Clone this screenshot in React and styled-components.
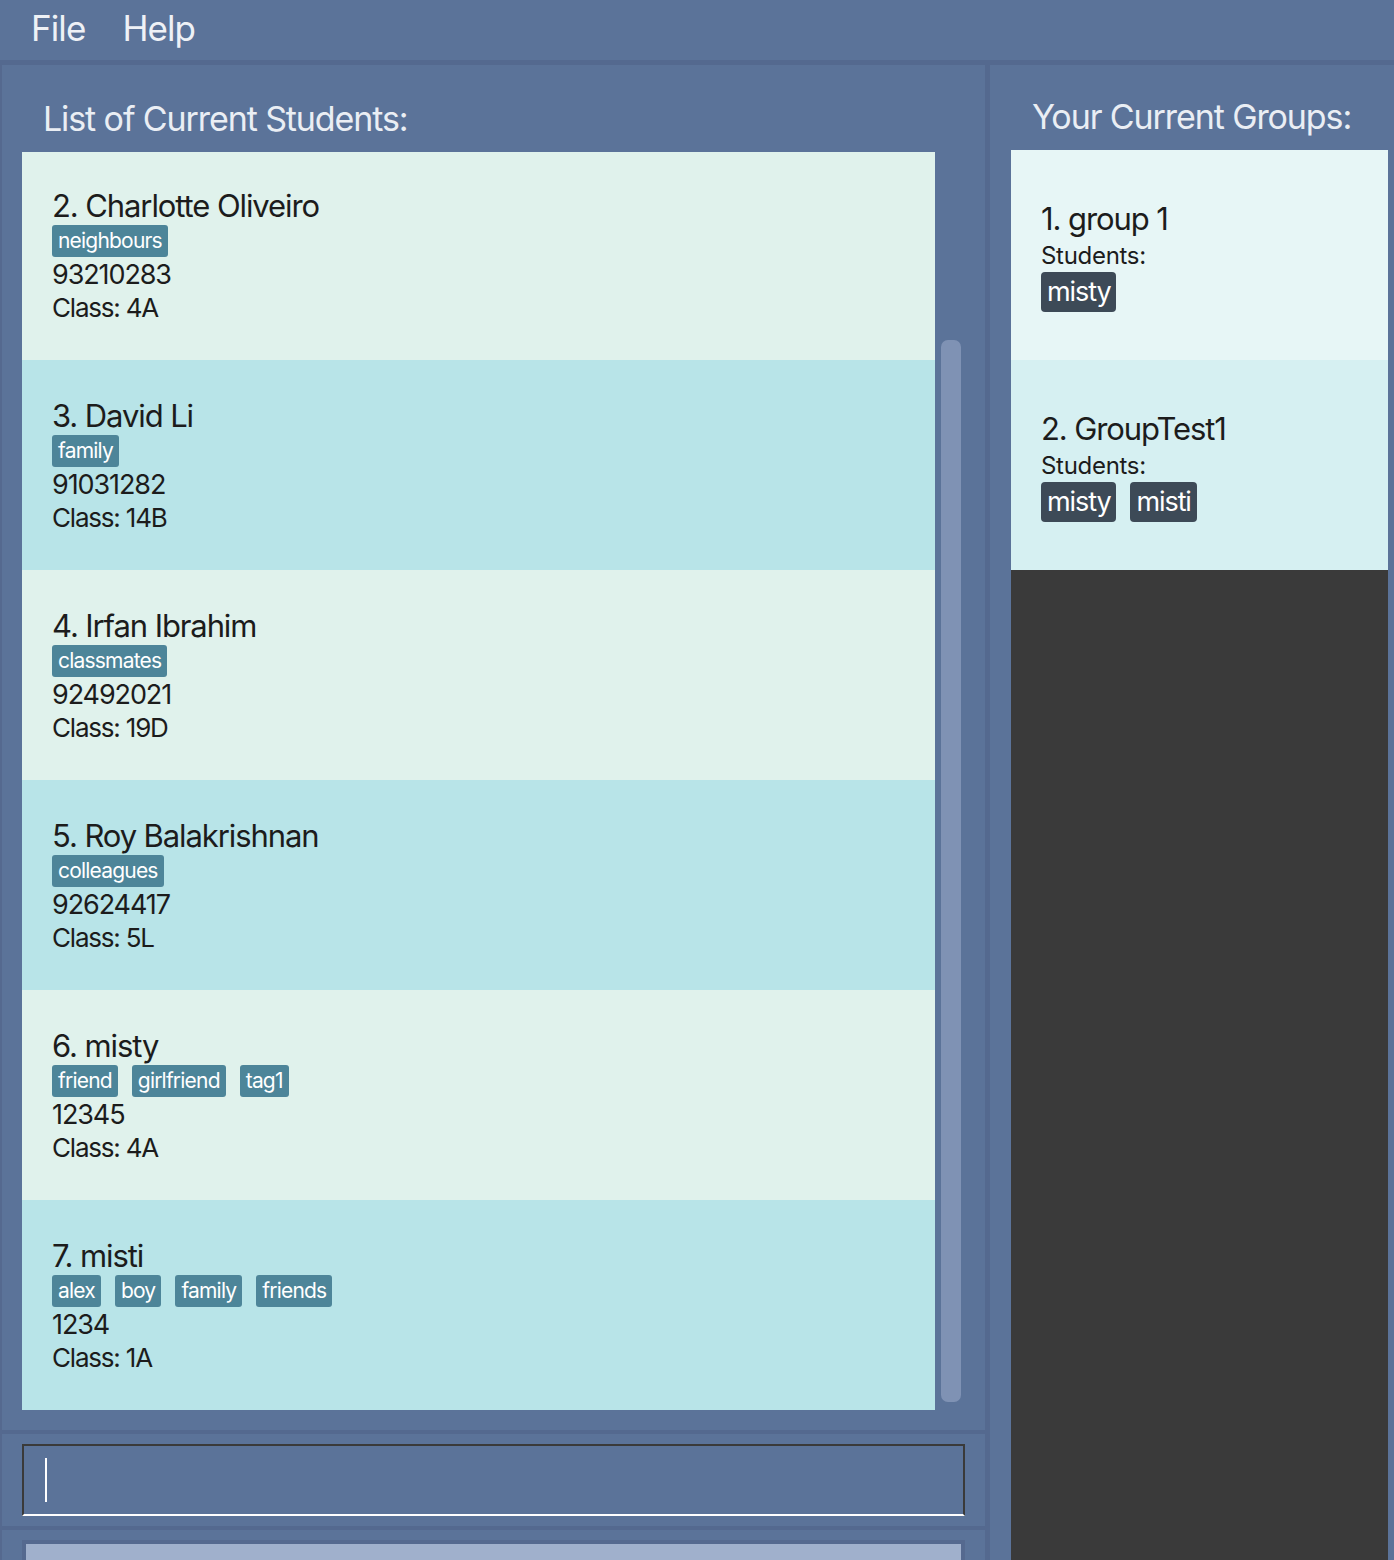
import React from 'react';
import styled, { createGlobalStyle } from 'styled-components';

const GlobalStyle = createGlobalStyle`
  html, body { margin: 0; padding: 0; background: #5b7399; }
  body { font-family: Inter, "Noto Sans", sans-serif; -webkit-font-smoothing: antialiased; }
  * { box-sizing: border-box; }
`;

const Window = styled.div`
  width: 1394px;
  height: 1560px;
  overflow: hidden;
  background: #5b7399;
  display: flex;
  flex-direction: column;
`;

const MenuBar = styled.div`
  height: 65px;
  flex: none;
  border-bottom: 5px solid #54698f;
  display: flex;
  align-items: flex-start;
  gap: 37px;
  padding-left: 31px;
`;

const MenuItem = styled.span`
  font-size: 35px;
  line-height: 56px;
  color: #eef1f6;
  letter-spacing: -0.9px;
`;

const Main = styled.div`
  flex: 1;
  min-height: 0;
  display: flex;
`;

const LeftColumn = styled.div`
  width: 990px;
  flex: none;
  display: flex;
  flex-direction: column;
  border-left: 2px solid #55698f;
  border-right: 5px solid #54698f;
`;

const StudentPanel = styled.section`
  flex: none;
  padding: 0 22px 20px 20px;
  border-bottom: 4px solid #54698f;
  display: flex;
  flex-direction: column;
`;

const PanelTitle = styled.h2`
  margin: 0 0 0 21px;
  height: ${p => p.$h}px;
  padding-top: ${p => p.$pt}px;
  font-size: 34px;
  line-height: 42px;
  font-weight: 400;
  color: #eaeef4;
  letter-spacing: -1.1px;
  white-space: nowrap;
`;

const ListRow = styled.div`
  display: flex;
  gap: 6px;
  height: 1258px;
`;

const ListViewport = styled.div`
  width: 913px;
  overflow: hidden;
`;

const StudentList = styled.div`
  display: flex;
  flex-direction: column;
  margin-top: -2px;
`;

const StudentCard = styled.div`
  height: 210px;
  flex: none;
  padding: 37px 0 0 30px;
  background: ${p => (p.$alt ? '#b8e4e8' : '#e0f2ec')};
  color: #1c1c1c;
`;

const Name = styled.div`
  font-size: 31px;
  line-height: 38px;
  letter-spacing: -1.1px;
`;

const Tags = styled.div`
  display: flex;
  gap: ${p => p.$gap}px;
  margin-top: ${p => p.$mt}px;
`;

const Tag = styled.span`
  background: #4d8599;
  color: #ffffff;
  font-size: 21px;
  line-height: 32px;
  padding: 0 6px;
  border-radius: 3px;
  letter-spacing: -0.8px;
`;

const Phone = styled.div`
  font-size: 27px;
  line-height: 36px;
  letter-spacing: -1.1px;
`;

const ClassLine = styled.div`
  font-size: 26px;
  line-height: 30px;
  letter-spacing: -1.2px;
`;

const ScrollTrack = styled.div`
  width: 20px;
  padding-top: 188px;
  padding-bottom: 8px;
  display: flex;
`;

const ScrollThumb = styled.div`
  flex: 1;
  background: #7f92b4;
  border-radius: 7px;
`;

const CommandPanel = styled.section`
  flex: none;
  padding: 10px 20px 10px 20px;
  border-bottom: 4px solid #54698f;
`;

const CommandBox = styled.div`
  width: 943px;
  height: 72px;
  border: 2px solid #3a3a3a;
  border-bottom: 2px solid #ffffff;
  padding: 12px 0 0 21px;
`;

const Caret = styled.span`
  display: block;
  width: 2px;
  height: 44px;
  background: #ffffff;
`;

const ResultPanel = styled.section`
  flex: 1;
  padding: 10px 20px 0 20px;
`;

const ResultBox = styled.div`
  width: 943px;
  height: 40px;
  border: 4px solid #55698f;
  border-bottom: none;
  background: #a0b0cc;
`;

const RightColumn = styled.div`
  flex: 1;
  display: flex;
  flex-direction: column;
  padding: 0 6px 0 21px;
`;

const GroupList = styled.div`
  flex: 1;
  background: #3a3a3a;
  display: flex;
  flex-direction: column;
`;

const GroupCard = styled.div`
  height: 210px;
  flex: none;
  padding: 50px 0 0 30px;
  background: ${p => (p.$alt ? '#d6f0f2' : '#e7f6f6')};
  color: #1c1c1c;
`;

const StudentsLabel = styled.div`
  margin-top: 3px;
  font-size: 24px;
  line-height: 30px;
  letter-spacing: -0.3px;
`;

const MemberTag = styled.span`
  background: #3d4a57;
  color: #ffffff;
  font-size: 27px;
  line-height: 40px;
  padding: 0 6px;
  border-radius: 4px;
  letter-spacing: -1.1px;
`;

const students = [
  { n: 2, name: 'Charlotte Oliveiro', tags: ['neighbours'], phone: '93210283', cls: '4A' },
  { n: 3, name: 'David Li', tags: ['family'], phone: '91031282', cls: '14B' },
  { n: 4, name: 'Irfan Ibrahim', tags: ['classmates'], phone: '92492021', cls: '19D' },
  { n: 5, name: 'Roy Balakrishnan', tags: ['colleagues'], phone: '92624417', cls: '5L' },
  { n: 6, name: 'misty', tags: ['friend', 'girlfriend', 'tag1'], phone: '12345', cls: '4A' },
  { n: 7, name: 'misti', tags: ['alex', 'boy', 'family', 'friends'], phone: '1234', cls: '1A' },
];

const groups = [
  { n: 1, name: 'group 1', members: ['misty'] },
  { n: 2, name: 'GroupTest1', members: ['misty', 'misti'] },
];

export default function App() {
  return (
    <Window>
      <GlobalStyle />
      <MenuBar>
        <MenuItem>File</MenuItem>
        <MenuItem>Help</MenuItem>
      </MenuBar>
      <Main>
        <LeftColumn>
          <StudentPanel>
            <PanelTitle $h={87} $pt={33}>List of Current Students:</PanelTitle>
            <ListRow>
              <ListViewport>
                <StudentList>
                  {students.map((s, i) => (
                    <StudentCard key={s.n} $alt={i % 2 === 1}>
                      <Name>{s.n}. {s.name}</Name>
                      <Tags $gap={14} $mt={0}>
                        {s.tags.map(t => <Tag key={t}>{t}</Tag>)}
                      </Tags>
                      <Phone>{s.phone}</Phone>
                      <ClassLine>Class: {s.cls}</ClassLine>
                    </StudentCard>
                  ))}
                </StudentList>
              </ListViewport>
              <ScrollTrack>
                <ScrollThumb />
              </ScrollTrack>
            </ListRow>
          </StudentPanel>
          <CommandPanel>
            <CommandBox>
              <Caret />
            </CommandBox>
          </CommandPanel>
          <ResultPanel>
            <ResultBox />
          </ResultPanel>
        </LeftColumn>
        <RightColumn>
          <PanelTitle $h={85} $pt={31}>Your Current Groups:</PanelTitle>
          <GroupList>
            {groups.map((g, i) => (
              <GroupCard key={g.n} $alt={i % 2 === 1}>
                <Name>{g.n}. {g.name}</Name>
                <StudentsLabel>Students:</StudentsLabel>
                <Tags $gap={14} $mt={1}>
                  {g.members.map(m => <MemberTag key={m}>{m}</MemberTag>)}
                </Tags>
              </GroupCard>
            ))}
          </GroupList>
        </RightColumn>
      </Main>
    </Window>
  );
}
